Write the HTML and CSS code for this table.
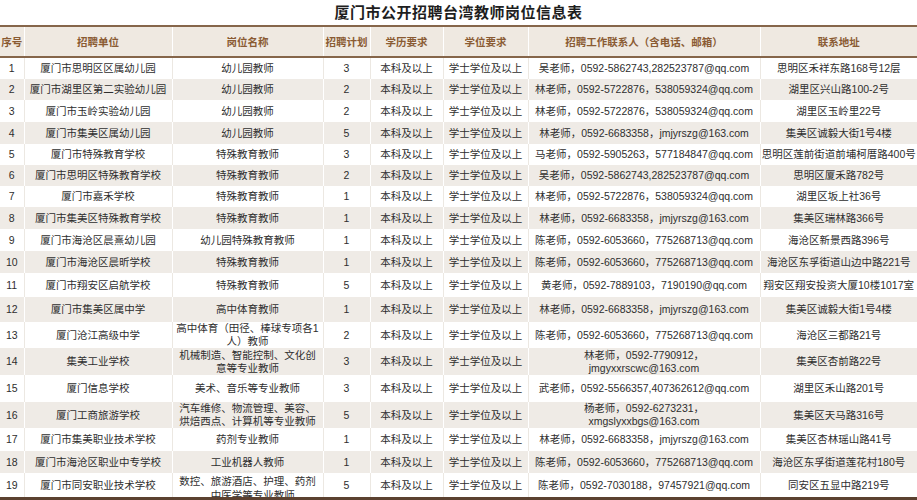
FILE: index.html
```html
<!DOCTYPE html>
<html lang="zh-CN">
<head>
<meta charset="utf-8">
<title>厦门市公开招聘台湾教师岗位信息表</title>
<link rel="stylesheet" href="styles.css">
</head>
<body>
<div class="sheet">
  <div class="clip">
    <h1 class="title">厦门市公开招聘台湾教师岗位信息表</h1>
    <table class="jobs">
      <colgroup>
        <col class="c-no"><col class="c-unit"><col class="c-post"><col class="c-plan"><col class="c-edu"><col class="c-deg"><col class="c-contact"><col class="c-addr">
      </colgroup>
      <thead>
        <tr><th>序号</th><th>招聘单位</th><th>岗位名称</th><th>招聘计划</th><th>学历要求</th><th>学位要求</th><th>招聘工作联系人（含电话、邮箱）</th><th>联系地址</th></tr>
      </thead>
      <tbody>
        <tr><td>1</td><td>厦门市思明区区属幼儿园</td><td>幼儿园教师</td><td>3</td><td>本科及以上</td><td>学士学位及以上</td><td>吴老师，0592-5862743,282523787@qq.com</td><td>思明区禾祥东路168号12层</td></tr>
        <tr><td>2</td><td>厦门市湖里区第二实验幼儿园</td><td>幼儿园教师</td><td>2</td><td>本科及以上</td><td>学士学位及以上</td><td>林老师，0592-5722876，538059324@qq.com</td><td>湖里区兴山路100-2号</td></tr>
        <tr><td>3</td><td>厦门市玉岭实验幼儿园</td><td>幼儿园教师</td><td>2</td><td>本科及以上</td><td>学士学位及以上</td><td>林老师，0592-5722876，538059324@qq.com</td><td>湖里区玉岭里22号</td></tr>
        <tr><td>4</td><td>厦门市集美区属幼儿园</td><td>幼儿园教师</td><td>5</td><td>本科及以上</td><td>学士学位及以上</td><td>林老师，0592-6683358，jmjyrszg@163.com</td><td>集美区诚毅大街1号4楼</td></tr>
        <tr><td>5</td><td>厦门市特殊教育学校</td><td>特殊教育教师</td><td>3</td><td>本科及以上</td><td>学士学位及以上</td><td>马老师，0592-5905263，577184847@qq.com</td><td>思明区莲前街道前埔柯厝路400号</td></tr>
        <tr><td>6</td><td>厦门市思明区特殊教育学校</td><td>特殊教育教师</td><td>2</td><td>本科及以上</td><td>学士学位及以上</td><td>吴老师，0592-5862743,282523787@qq.com</td><td>思明区厦禾路782号</td></tr>
        <tr><td>7</td><td>厦门市嘉禾学校</td><td>特殊教育教师</td><td>1</td><td>本科及以上</td><td>学士学位及以上</td><td>林老师，0592-5722876，538059324@qq.com</td><td>湖里区坂上社36号</td></tr>
        <tr><td>8</td><td>厦门市集美区特殊教育学校</td><td>特殊教育教师</td><td>1</td><td>本科及以上</td><td>学士学位及以上</td><td>林老师，0592-6683358，jmjyrszg@163.com</td><td>集美区瑞林路366号</td></tr>
        <tr><td>9</td><td>厦门市海沧区晨熹幼儿园</td><td>幼儿园特殊教育教师</td><td>1</td><td>本科及以上</td><td>学士学位及以上</td><td>陈老师，0592-6053660，775268713@qq.com</td><td>海沧区新景西路396号</td></tr>
        <tr><td>10</td><td>厦门市海沧区晨昕学校</td><td>特殊教育教师</td><td>1</td><td>本科及以上</td><td>学士学位及以上</td><td>陈老师，0592-6053660，775268713@qq.com</td><td>海沧区东孚街道山边中路221号</td></tr>
        <tr><td>11</td><td>厦门市翔安区启航学校</td><td>特殊教育教师</td><td>5</td><td>本科及以上</td><td>学士学位及以上</td><td>黄老师，0592-7889103，7190190@qq.com</td><td>翔安区翔安投资大厦10楼1017室</td></tr>
        <tr><td>12</td><td>厦门市集美区属中学</td><td>高中体育教师</td><td>1</td><td>本科及以上</td><td>学士学位及以上</td><td>林老师，0592-6683358，jmjyrszg@163.com</td><td>集美区诚毅大街1号4楼</td></tr>
        <tr><td>13</td><td>厦门沧江高级中学</td><td class="wrap">高中体育（田径、棒球专项各1<br>人）教师</td><td>2</td><td>本科及以上</td><td>学士学位及以上</td><td>陈老师，0592-6053660，775268713@qq.com</td><td>海沧区三都路21号</td></tr>
        <tr><td>14</td><td>集美工业学校</td><td class="wrap">机械制造、智能控制、文化创<br>意等专业教师</td><td>3</td><td>本科及以上</td><td>学士学位及以上</td><td class="wrap">林老师，0592-7790912，<br>jmgyxxrscwc@163.com</td><td>集美区杏前路22号</td></tr>
        <tr><td>15</td><td>厦门信息学校</td><td>美术、音乐等专业教师</td><td>3</td><td>本科及以上</td><td>学士学位及以上</td><td>武老师，0592-5566357,407362612@qq.com</td><td>湖里区禾山路201号</td></tr>
        <tr><td>16</td><td>厦门工商旅游学校</td><td class="wrap">汽车维修、物流管理、美容、<br>烘焙西点、计算机等专业教师</td><td>5</td><td>本科及以上</td><td>学士学位及以上</td><td class="wrap">杨老师，0592-6273231，<br>xmgslyxxbgs@163.com</td><td>集美区天马路316号</td></tr>
        <tr><td>17</td><td>厦门市集美职业技术学校</td><td>药剂专业教师</td><td>1</td><td>本科及以上</td><td>学士学位及以上</td><td>林老师，0592-6683358，jmjyrszg@163.com</td><td>集美区杏林瑶山路41号</td></tr>
        <tr><td>18</td><td>厦门市海沧区职业中专学校</td><td>工业机器人教师</td><td>1</td><td>本科及以上</td><td>学士学位及以上</td><td>陈老师，0592-6053660，775268713@qq.com</td><td>海沧区东孚街道莲花村180号</td></tr>
        <tr class="last"><td><span class="mid">19</span></td><td><span class="mid">厦门市同安职业技术学校</span></td><td class="wrap top">数控、旅游酒店、护理、药剂<br>、中医学等专业教师</td><td><span class="mid">5</span></td><td><span class="mid">本科及以上</span></td><td><span class="mid">学士学位及以上</span></td><td><span class="mid">陈老师，0592-7030188，97457921@qq.com</span></td><td><span class="mid">同安区五显中路219号</span></td></tr>
      </tbody>
    </table>
  </div>
  <div class="band"></div>
</div>
</body>
</html>
```

FILE: styles.css
```css
html, body {
  margin: 0;
  padding: 0;
  background: #ffffff;
}

.sheet {
  width: 917px;
  height: 500px;
  display: flex;
  flex-direction: column;
  font-family: "Liberation Sans", "Noto Sans CJK SC", sans-serif;
}

.clip {
  height: 497px;
  overflow: hidden;
  flex: none;
}

.band {
  flex: 1;
  background: #5b4130;
}

.title {
  margin: 0;
  height: 25px;
  line-height: 25px;
  text-align: center;
  font-size: 15px;
  font-weight: 700;
  color: #1e1e1e;
  letter-spacing: 0.5px;
  border-bottom: 2px solid #86664a;
}

.jobs {
  width: 917px;
  border-collapse: collapse;
  table-layout: fixed;
}

.c-no { width: 24px; }
.c-unit { width: 148px; }
.c-post { width: 151px; }
.c-plan { width: 47px; }
.c-edu { width: 73px; }
.c-deg { width: 85px; }
.c-contact { width: 232px; }
.c-addr { width: 157px; }

.jobs th {
  height: 29px;
  padding: 0;
  background: #efe9e1;
  color: #8a5b33;
  font-size: 10.5px;
  font-weight: 700;
  text-align: center;
  white-space: nowrap;
  border-right: 1px solid #ffffff;
  border-bottom: 2px solid #86664a;
}

.jobs td {
  padding: 0;
  font-size: 10.5px;
  color: #2e2e2e;
  text-align: center;
  vertical-align: middle;
  white-space: nowrap;
  line-height: 13px;
  border-right: 1px solid #ece8e2;
}

.jobs th:last-child,
.jobs td:last-child {
  border-right: none;
}

.jobs tbody tr:nth-child(even) td {
  background: #efebe6;
  border-right-color: #ffffff;
}

.jobs td.wrap {
  line-height: 13px;
}

.jobs tbody tr:nth-child(1) { height: 22px; }
.jobs tbody tr:nth-child(2) { height: 21px; }
.jobs tbody tr:nth-child(3) { height: 22px; }
.jobs tbody tr:nth-child(4) { height: 22px; }
.jobs tbody tr:nth-child(5) { height: 21px; }
.jobs tbody tr:nth-child(6) { height: 21px; }
.jobs tbody tr:nth-child(7) { height: 21px; }
.jobs tbody tr:nth-child(8) { height: 22px; }
.jobs tbody tr:nth-child(9) { height: 22px; }
.jobs tbody tr:nth-child(10) { height: 22px; }
.jobs tbody tr:nth-child(11) { height: 24px; }
.jobs tbody tr:nth-child(12) { height: 25px; }
.jobs tbody tr:nth-child(13) { height: 26px; }
.jobs tbody tr:nth-child(14) { height: 27px; }
.jobs tbody tr:nth-child(15) { height: 27px; }
.jobs tbody tr:nth-child(16) { height: 25px; }
.jobs tbody tr:nth-child(17) { height: 23px; }
.jobs tbody tr:nth-child(18) { height: 22px; }

.jobs tr.last td {
  vertical-align: top;
  height: 30px;
}

.jobs tr.last td.top {
  padding-top: 1px;
  line-height: 14px;
}

.jobs tr.last .mid {
  display: block;
  height: 24px;
  line-height: 24px;
}
```
